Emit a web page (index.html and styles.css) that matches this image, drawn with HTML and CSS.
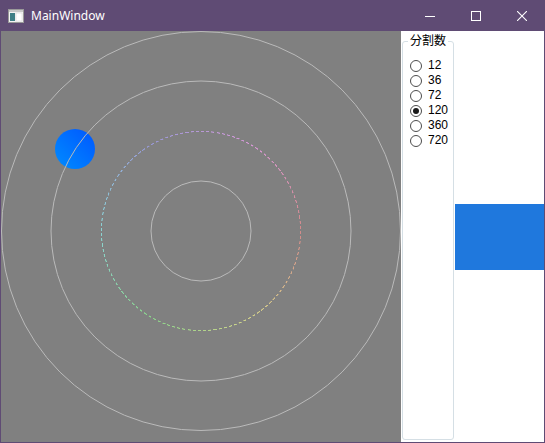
FILE: index.html
```html
<!DOCTYPE html>
<html lang="ja">
<head>
    <meta charset="UTF-8">
    <title>MainWindow</title>
    <link rel="stylesheet" href="styles.css">
</head>
<body>
    <div class="window">
        <div class="titlebar">
            <svg class="app-icon" width="16" height="14" viewBox="0 0 16 14">
                <rect x="0.5" y="0.5" width="15" height="13" fill="#f4f4f4" stroke="#9a9a9a"/>
                <rect x="1" y="1" width="14" height="2" fill="#c8c8c8"/>
                <rect x="2" y="4" width="5" height="8" fill="#3f7f86"/>
                <rect x="8" y="4" width="6" height="8" fill="#ffffff" stroke="#d0d0d0" stroke-width="0.5"/>
            </svg>
            <span class="title">MainWindow</span>
            <div class="controls">
                <span class="ctl">
                    <svg width="10" height="10" viewBox="0 0 10 10"><path d="M0 5.5H10" stroke="#fff" stroke-width="1"/></svg>
                </span>
                <span class="ctl">
                    <svg width="10" height="10" viewBox="0 0 10 10"><rect x="0.5" y="0.5" width="9" height="9" fill="none" stroke="#fff" stroke-width="1"/></svg>
                </span>
                <span class="ctl">
                    <svg width="10" height="10" viewBox="0 0 10 10"><path d="M0 0L10 10M10 0L0 10" stroke="#fff" stroke-width="1.1"/></svg>
                </span>
            </div>
        </div>
        <div class="client">
            <div class="canvas">
                <div class="ball"></div>
                <div class="ring"><div class="ring-dash"></div></div>
                <svg class="guides" width="400" height="411" viewBox="0 0 400 411">
                    <circle cx="200" cy="200" r="50"/>
                    <circle cx="200" cy="200" r="150"/>
                    <circle cx="200" cy="200" r="199.5"/>
                </svg>
            </div>
            <div class="side">
                <fieldset class="group">
                    <legend>分割数</legend>
                    <label class="opt"><input type="radio" name="div" value="12"><span>12</span></label>
                    <label class="opt"><input type="radio" name="div" value="36"><span>36</span></label>
                    <label class="opt"><input type="radio" name="div" value="72"><span>72</span></label>
                    <label class="opt"><input type="radio" name="div" value="120" checked><span>120</span></label>
                    <label class="opt"><input type="radio" name="div" value="360"><span>360</span></label>
                    <label class="opt"><input type="radio" name="div" value="720"><span>720</span></label>
                </fieldset>
                <div class="swatch-area">
                    <div class="swatch"></div>
                </div>
            </div>
        </div>
    </div>
</body>
</html>
```

FILE: styles.css
```css
body {
    margin: 0;
    padding: 0;
    font-family: "Noto Sans", "Noto Sans CJK JP", sans-serif;
    font-size: 12px;
    background: #fff;
}
.window {
    width: 545px;
    height: 443px;
    box-sizing: border-box;
    border: 1px solid #5f4b74;
    border-top: none;
    display: flex;
    flex-direction: column;
}
.titlebar {
    height: 31px;
    margin: 0 -1px;
    background: #5f4b74;
    color: #fff;
    display: flex;
    align-items: center;
}
.app-icon {
    margin-left: 8px;
    margin-top: 1px;
}
.title {
    margin-left: 7px;
    font-size: 12px;
    line-height: 16px;
}
.controls {
    margin-left: auto;
    display: flex;
    height: 100%;
}
.ctl {
    width: 46px;
    height: 100%;
    display: flex;
    align-items: center;
    justify-content: center;
}
.client {
    flex: 1;
    display: flex;
    background: #fff;
}
.canvas {
    width: 400px;
    height: 411px;
    background: #808080;
    position: relative;
    overflow: hidden;
}
.guides {
    position: absolute;
    left: 0;
    top: 0;
}
.guides circle {
    fill: none;
    stroke: #bababa;
    stroke-width: 1;
}
.ball {
    position: absolute;
    left: 54px;
    top: 98px;
    width: 40px;
    height: 40px;
    border-radius: 50%;
    background: linear-gradient(45deg, #008dff, #0056ff);
}
.ring {
    position: absolute;
    left: 100px;
    top: 100px;
    width: 200px;
    height: 200px;
    opacity: 0.85;
    -webkit-mask: radial-gradient(circle closest-side, transparent 98.8px, #000 99.3px, #000 99.9px, transparent 100.4px);
    mask: radial-gradient(circle closest-side, transparent 98.8px, #000 99.3px, #000 99.9px, transparent 100.4px);
}
.ring-dash {
    width: 100%;
    height: 100%;
    background: conic-gradient(from 90deg, hsl(0, 60%, 72%), hsl(60, 60%, 72%), hsl(120, 60%, 72%), hsl(180, 60%, 72%), hsl(240, 60%, 76%), hsl(300, 60%, 76%), hsl(360, 60%, 72%));
    -webkit-mask: repeating-conic-gradient(#000 0deg 1.8deg, transparent 1.8deg 3deg);
    mask: repeating-conic-gradient(#000 0deg 1.8deg, transparent 1.8deg 3deg);
}
.side {
    flex: 1;
    display: flex;
}
.group {
    box-sizing: border-box;
    width: 52px;
    margin: 2px 0 2px 1px;
    padding: 9px 0 0 5px;
    border: 1px solid #d5dfe5;
    border-radius: 3px;
    min-width: 0;
}
.group legend {
    padding: 0 2px;
    line-height: 16px;
    color: #000;
}
.opt {
    display: flex;
    align-items: center;
    height: 15px;
    color: #000;
    white-space: nowrap;
    font-family: "Liberation Sans", "Noto Sans", sans-serif;
    font-size: 12px;
    line-height: 13px;
}
.opt input {
    appearance: none;
    -webkit-appearance: none;
    box-sizing: border-box;
    width: 12px;
    height: 12px;
    margin: 0 6px 0 2px;
    border: 1px solid #4d4d4d;
    border-radius: 50%;
    background: #fff;
    position: relative;
}
.opt input:checked::after {
    content: "";
    position: absolute;
    left: 2px;
    top: 2px;
    width: 6px;
    height: 6px;
    border-radius: 50%;
    background: #1a1a1a;
}
.swatch-area {
    flex: 1;
    display: flex;
    align-items: center;
    padding-left: 1px;
}
.swatch {
    width: 100%;
    height: 66px;
    background: #1f78dd;
}
```
